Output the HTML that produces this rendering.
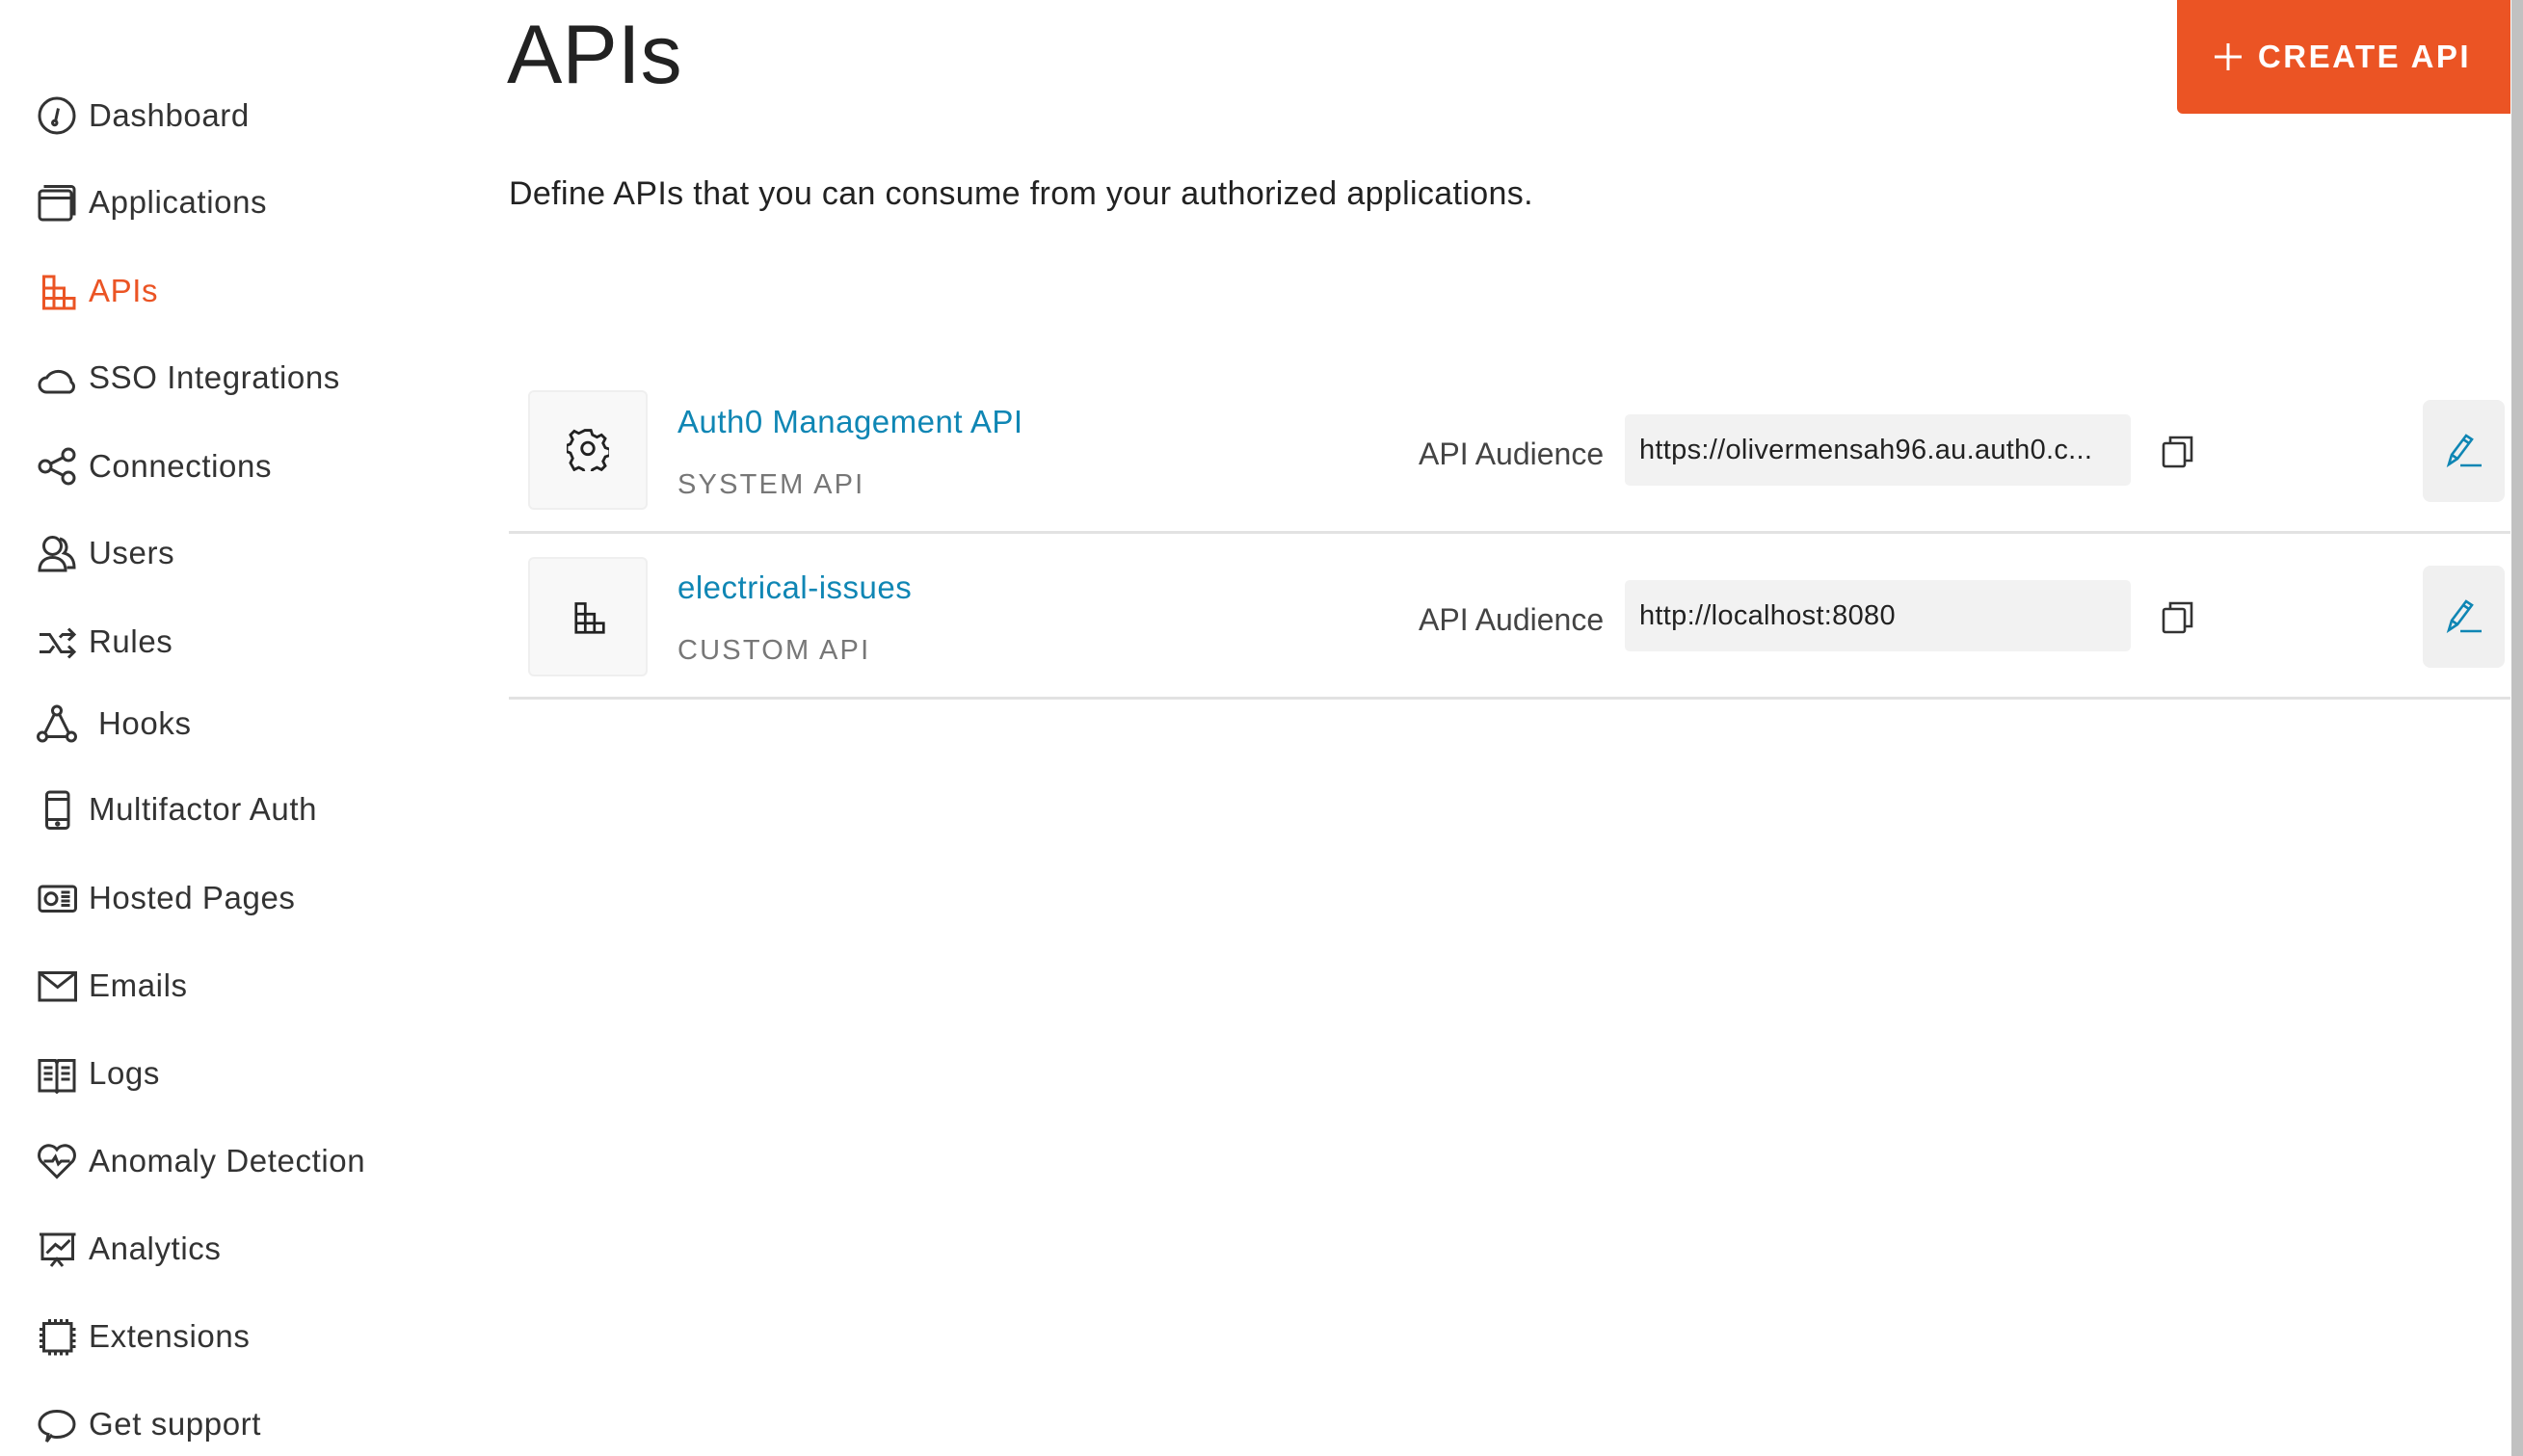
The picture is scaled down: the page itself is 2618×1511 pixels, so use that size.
<!DOCTYPE html>
<html><head><meta charset="utf-8"><style>
*{margin:0;padding:0;box-sizing:border-box}
body{width:2618px;height:1511px;background:#fff;font-family:"Liberation Sans",sans-serif;color:#222;position:relative;overflow:hidden}
.a{position:absolute;white-space:nowrap}
.nav{position:absolute;left:38px;height:44px;display:flex;align-items:center;font-size:33px;color:#333;letter-spacing:0.6px}
.nav svg{width:42px;height:42px;margin-right:12px;fill:none;stroke:#333;stroke-width:2}
.nav.act{color:#eb5424}.nav.act svg{stroke:#eb5424}
.box{position:absolute;background:#f8f8f8;border:2px solid #efefef;border-radius:6px;display:flex;align-items:center;justify-content:center}
.inp{position:absolute;background:#f2f2f2;border-radius:5px;font-size:29px;color:#222;padding-left:15px;display:flex;align-items:center;letter-spacing:0.3px}
.edit{position:absolute;background:#f0f0f0;border-radius:8px;display:flex;align-items:center;justify-content:center}
.hr{position:absolute;left:528px;width:2077px;height:3px;background:#e2e2e2}
</style></head><body>
<div class="nav" style="top:98px"><svg viewBox="0 0 28 28"><circle cx="14" cy="14" r="12"/><path d="M15 9l-2 9"/><circle cx="12.5" cy="19" r="1.5"/></svg>Dashboard</div>
<div class="nav" style="top:188px"><svg viewBox="0 0 28 28"><rect x="2" y="6" width="22" height="20" rx="2"/><path d="M2 11h22M5 3h19a2 2 0 012 2v18"/></svg>Applications</div>
<div class="nav act" style="top:280px"><svg viewBox="0 0 28 28"><path d="M5 4h7v22H5zM12 12h7v14h-7zM19 19h7v7h-7zM5 12h7M5 19h14"/></svg>APIs</div>
<div class="nav" style="top:370px"><svg viewBox="0 0 28 28"><path d="M7 24a5 5 0 010-10 9 8 0 0117 3 4 4 0 01-1 7z"/></svg>SSO Integrations</div>
<div class="nav" style="top:462px"><svg viewBox="0 0 28 28"><circle cx="6" cy="14" r="4"/><circle cx="22" cy="6" r="4"/><circle cx="22" cy="22" r="4"/><path d="M10 12l8-4M10 16l8 4"/></svg>Connections</div>
<div class="nav" style="top:552px"><svg viewBox="0 0 28 28"><circle cx="11" cy="9" r="6"/><path d="M2 26c0-6 4-9 9-9s9 3 9 9zM16 4a6 6 0 013 10c4 1 7 4 7 10h-5"/></svg>Users</div>
<div class="nav" style="top:644px"><svg viewBox="0 0 28 28"><path d="M2 9h7l8 12h8M2 21h7l3-4M16 11l2-2h7M22 5l4 4-4 4M22 17l4 4-4 4"/></svg>Rules</div>
<div class="nav" style="top:729px"><svg viewBox="0 0 28 28" style="margin-right:22px"><circle cx="14" cy="5" r="3"/><circle cx="4" cy="23" r="3"/><circle cx="24" cy="23" r="3"/><path d="M12 8l-6 12M16 8l6 12M7 23h14"/></svg>Hooks</div>
<div class="nav" style="top:818px"><svg viewBox="0 0 28 28"><rect x="7" y="2" width="15" height="25" rx="2"/><path d="M7 7h15M7 21h15"/><circle cx="14.5" cy="24" r=".8"/></svg>Multifactor Auth</div>
<div class="nav" style="top:910px"><svg viewBox="0 0 28 28"><rect x="2" y="6" width="25" height="17" rx="2"/><circle cx="10" cy="14.5" r="4"/><path d="M17 10h6M17 13h6M17 16h6M17 19h6"/></svg>Hosted Pages</div>
<div class="nav" style="top:1001px"><svg viewBox="0 0 28 28"><rect x="2" y="5" width="25" height="19"/><path d="M2 5l12.5 10L27 5"/></svg>Emails</div>
<div class="nav" style="top:1092px"><svg viewBox="0 0 28 28"><path d="M2 5h11l1 2 1-2h11v21H15l-1 1-1-1H2zM14 7v19M5 10h6M5 14h6M5 18h6M17 10h6M17 14h6M17 18h6"/></svg>Logs</div>
<div class="nav" style="top:1183px"><svg viewBox="0 0 28 28"><path d="M14 25L3 14a6 6 0 0111-8 6 6 0 0111 8zM5 14h6l2-3 2 5 2-2h6"/></svg>Anomaly Detection</div>
<div class="nav" style="top:1274px"><svg viewBox="0 0 28 28"><path d="M2 4h25M4 4v17h21V4M10 26l4-5 4 5M7 17l6-6 4 3 6-6"/></svg>Analytics</div>
<div class="nav" style="top:1365px"><svg viewBox="0 0 28 28"><rect x="5" y="5" width="19" height="19"/><path d="M9 2v3M13 2v3M17 2v3M21 2v3M9 24v3M13 24v3M17 24v3M21 24v3M2 9h3M2 13h3M2 17h3M2 21h3M24 9h3M24 13h3M24 17h3M24 21h3"/></svg>Extensions</div>
<div class="nav" style="top:1456px"><svg viewBox="0 0 28 28"><path d="M8 21C4 20 2 17 2 14c0-5 5-9 12-9s12 4 12 9-5 9-12 9c-1 0-3 0-4-1l-3 4z"/></svg>Get support</div>

<div class="a" style="left:526px;top:8px;font-size:86px;color:#222">APIs</div>
<div class="a" style="left:2259px;top:0;width:346px;height:118px;background:#eb5424;border-radius:0 0 0 6px;color:#fff;font-size:33px;font-weight:bold;letter-spacing:2.5px;display:flex;align-items:center;justify-content:center;padding-right:4px"><svg width="32" height="32" viewBox="0 0 32 32" style="margin-right:15px"><path d="M16 2v28M2 16h28" stroke="#fff" stroke-width="3"/></svg>CREATE API</div>
<div class="a" style="right:0;top:0;width:12px;height:1511px;background:#c1c1c1"></div>
<div class="a" style="left:528px;top:182px;font-size:34px;color:#222;letter-spacing:0.35px">Define APIs that you can consume from your authorized applications.</div>

<div class="box" style="left:548px;top:405px;width:124px;height:124px"><svg width="44" height="44" viewBox="0 0 28 28" fill="none" stroke="#222" stroke-width="1.8"><path d="M12 2h4l1 3 3 1.5 3-1.5 2.5 2.5-1.5 3 1.5 3 3 1v4l-3 1-1.5 3 1.5 3-2.5 2.5-3-1.5-3 1.5-1 3h-4l-1-3-3-1.5-3 1.5L2.5 23.5l1.5-3L2.5 17 0 16v-4l2.5-1L4 8 2.5 5 5 2.5l3 1.5L11 2.5z" transform="translate(0 -1)"/><circle cx="14" cy="13" r="4"/></svg></div>
<div class="a" style="left:703px;top:419px;font-size:33px;color:#0f86b4;letter-spacing:0.5px">Auth0 Management API</div>
<div class="a" style="left:703px;top:487px;font-size:29px;color:#777;letter-spacing:2.2px">SYSTEM API</div>
<div class="a" style="left:1472px;top:453px;font-size:32px;color:#444">API Audience</div>
<div class="inp" style="left:1686px;top:430px;width:525px;height:74px">https://olivermensah96.au.auth0.c...</div>
<svg class="a" style="left:2243px;top:451px" width="34" height="36" viewBox="0 0 34 36" fill="none" stroke="#333" stroke-width="2.6"><rect x="2" y="9" width="22" height="24" rx="2"/><path d="M9 9V3h22v24h-7"/></svg>
<div class="edit" style="left:2514px;top:415px;width:85px;height:106px"><svg width="40" height="40" viewBox="0 0 40 40" fill="none" stroke="#0f86b4" stroke-width="2.6"><path d="M4 34l3-10 15-20 6 4-15 20zM7 24l6 4M19 8l6 4M16 35h22"/></svg></div>
<div class="hr" style="top:551px"></div>

<div class="box" style="left:548px;top:578px;width:124px;height:124px"><svg width="38" height="38" viewBox="0 0 28 28" fill="none" stroke="#222" stroke-width="2"><path d="M5 4h7v22H5zM12 12h7v14h-7zM19 19h7v7h-7zM5 12h7M5 19h14"/></svg></div>
<div class="a" style="left:703px;top:591px;font-size:33px;color:#0f86b4;letter-spacing:0.5px">electrical-issues</div>
<div class="a" style="left:703px;top:659px;font-size:29px;color:#777;letter-spacing:2.2px">CUSTOM API</div>
<div class="a" style="left:1472px;top:625px;font-size:32px;color:#444">API Audience</div>
<div class="inp" style="left:1686px;top:602px;width:525px;height:74px">http://localhost:8080</div>
<svg class="a" style="left:2243px;top:623px" width="34" height="36" viewBox="0 0 34 36" fill="none" stroke="#333" stroke-width="2.6"><rect x="2" y="9" width="22" height="24" rx="2"/><path d="M9 9V3h22v24h-7"/></svg>
<div class="edit" style="left:2514px;top:587px;width:85px;height:106px"><svg width="40" height="40" viewBox="0 0 40 40" fill="none" stroke="#0f86b4" stroke-width="2.6"><path d="M4 34l3-10 15-20 6 4-15 20zM7 24l6 4M19 8l6 4M16 35h22"/></svg></div>
<div class="hr" style="top:723px"></div>
</body></html>
